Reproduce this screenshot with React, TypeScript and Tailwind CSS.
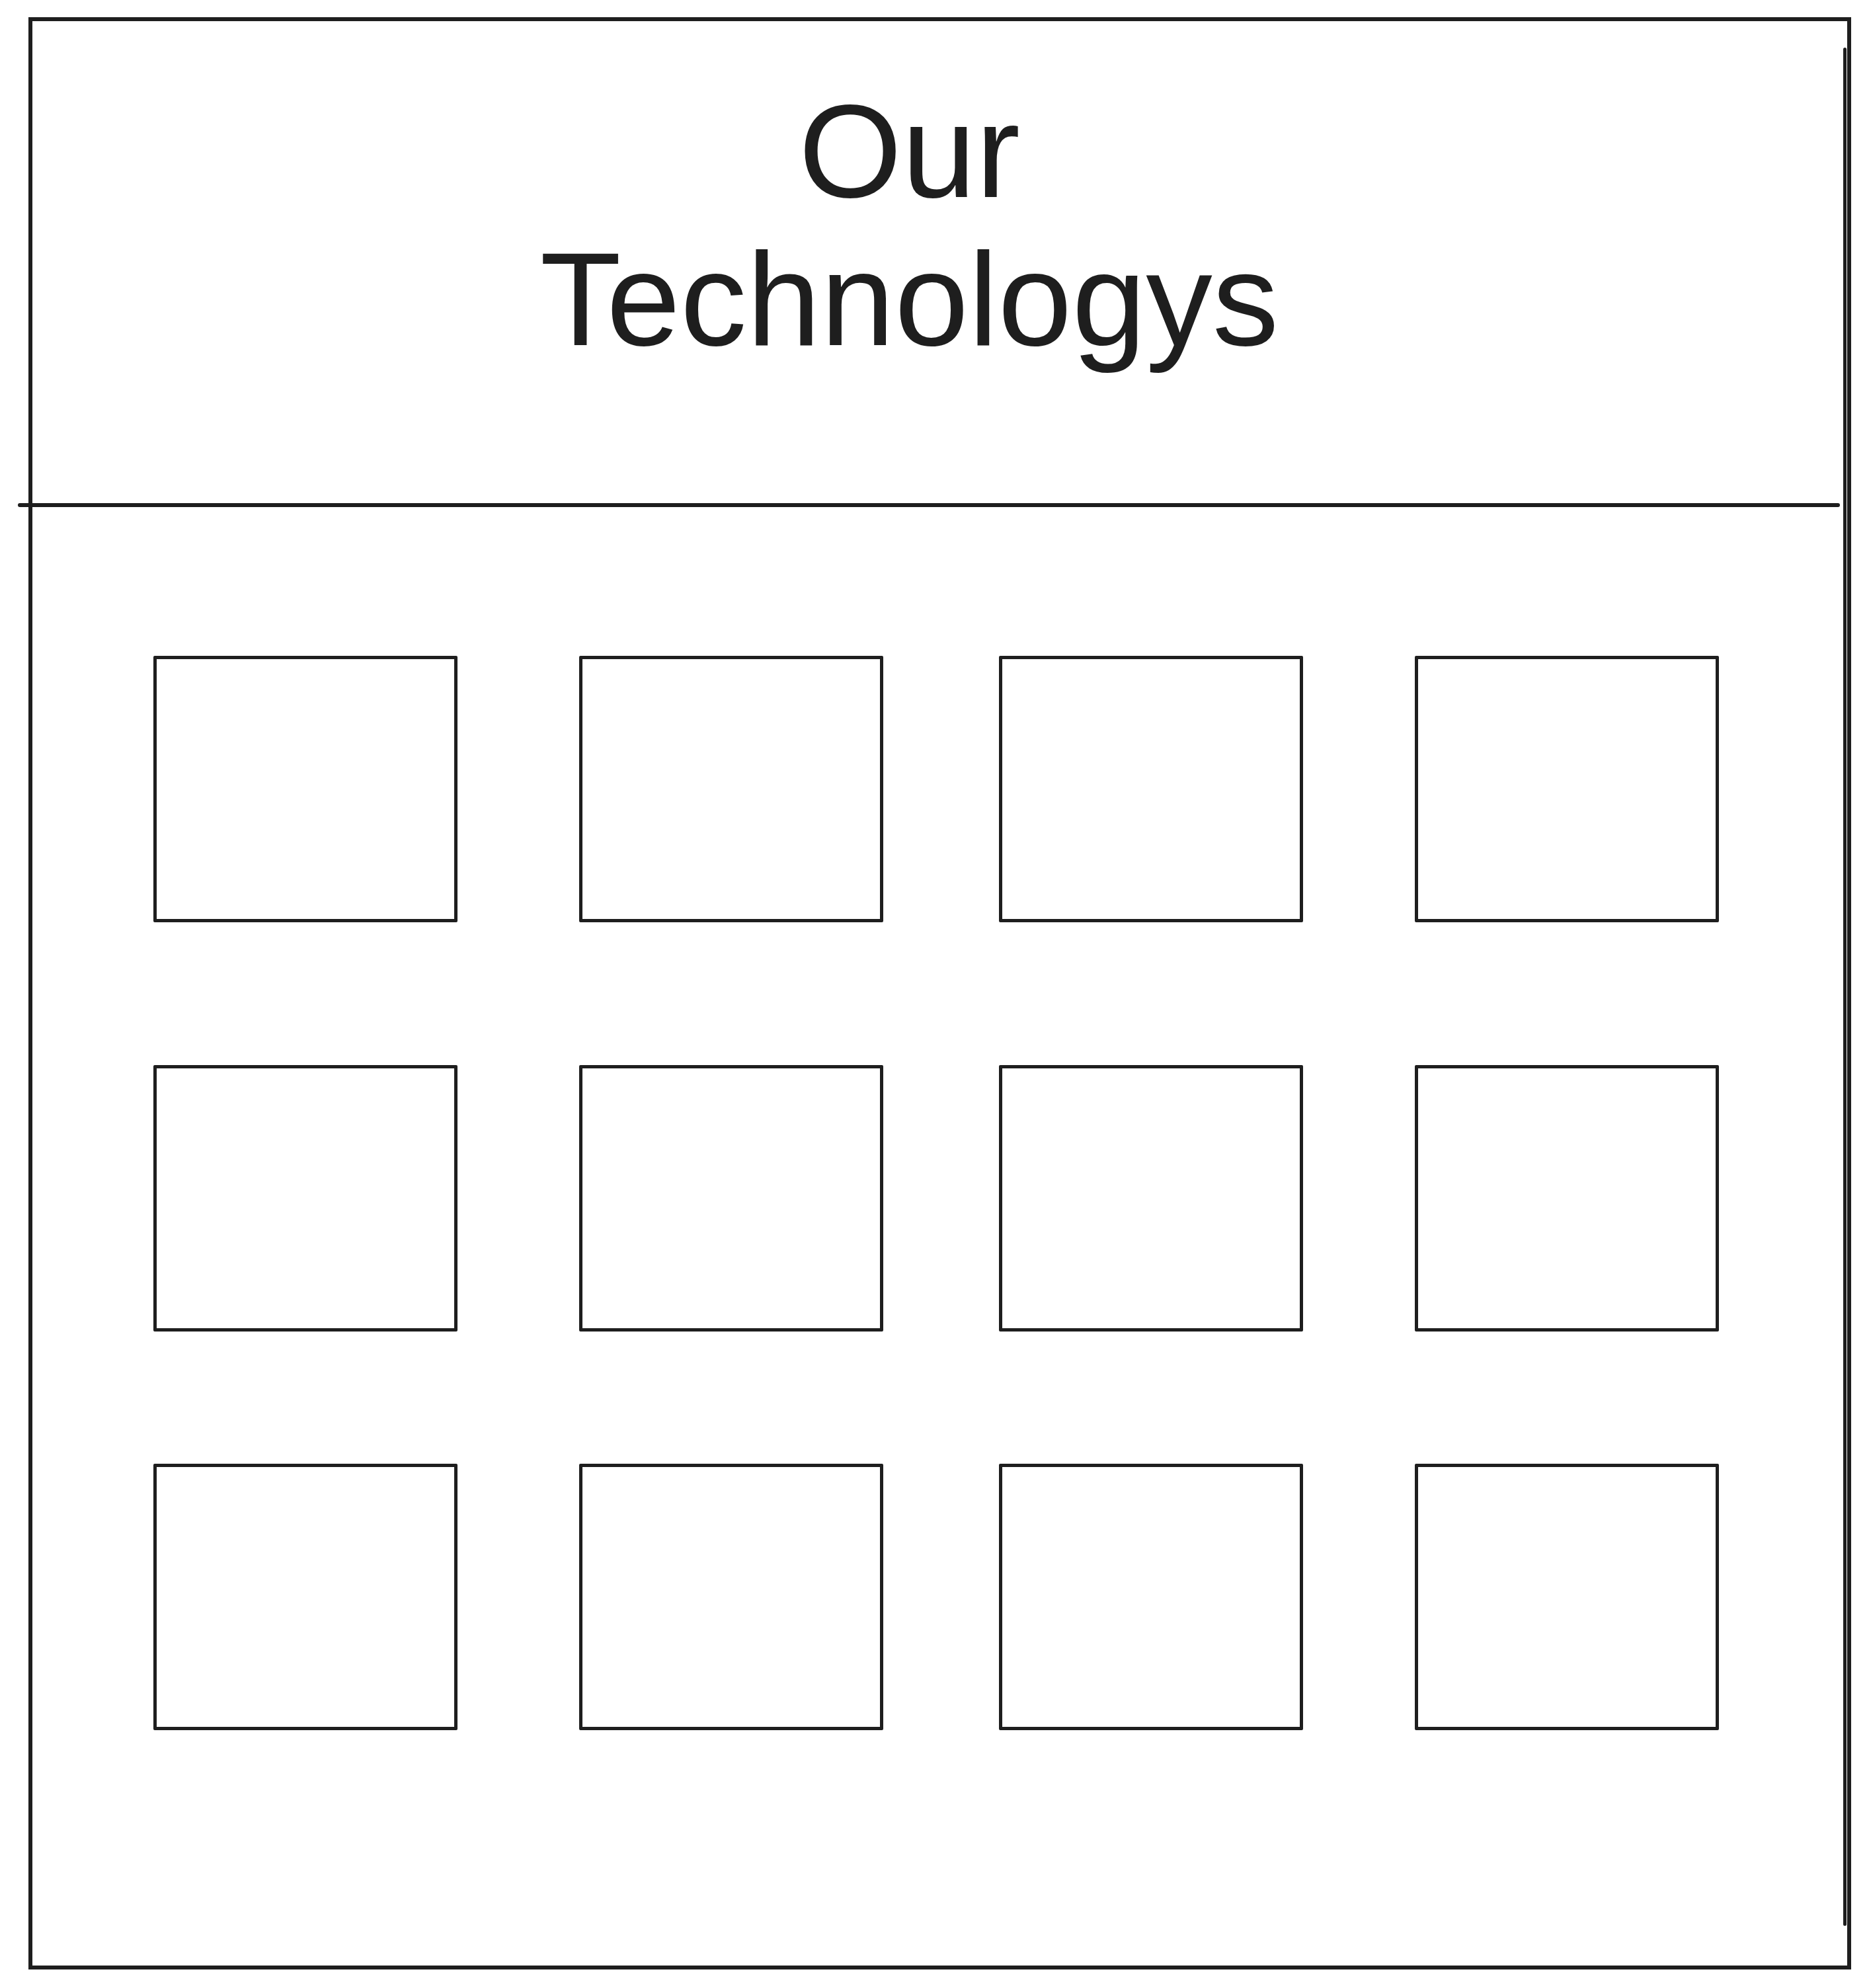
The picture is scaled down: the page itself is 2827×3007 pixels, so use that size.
const rows = [
  { id: 'r1', mt: 'mt-0' },
  { id: 'r2', mt: 'mt-[216px]' },
  { id: 'r3', mt: 'mt-[200px]' },
];

// hand-drawn spacing is a bit uneven between columns
const cols = ['ml-0', 'ml-[184px]', 'ml-[175px]', 'ml-[169px]'];

function TechBox({ className }: { className: string }) {
  return <div className={`w-[460px] h-[403px] border-[5px] border-[#1e1e1e] rounded-[2px] ${className}`} />;
}

export default function App() {
  return (
    <div className="w-[2827px] h-[3007px] bg-white overflow-hidden" style={{ fontFamily: '"Liberation Sans", Arial, sans-serif' }}>
      <div className="relative ml-[43px] mt-[26px] w-[2757px] h-[2953px] border-[6px] border-[#1e1e1e] flex flex-col">
        {/* second pencil stroke on the right edge */}
        <div className="absolute right-[1px] top-[40px] bottom-[60px] w-[5px] rounded-full bg-[#1e1e1e]" />

        {/* header */}
        <div className="h-[729px] pt-[85px] pr-[92px] text-center text-[#1e1e1e] text-[201px] leading-[224px]">
          <div>Our</div>
          <div>Technologys</div>
        </div>
        <div className="h-[6px] ml-[-22px] mr-[11px] rounded-full bg-[#1e1e1e]" />

        {/* logo grid */}
        <div className="pt-[225px] pl-[183px] flex flex-col">
          {rows.map((r) => (
            <div key={r.id} className={`flex ${r.mt}`}>
              {cols.map((c) => (
                <TechBox key={c} className={c} />
              ))}
            </div>
          ))}
        </div>
      </div>
    </div>
  );
}
